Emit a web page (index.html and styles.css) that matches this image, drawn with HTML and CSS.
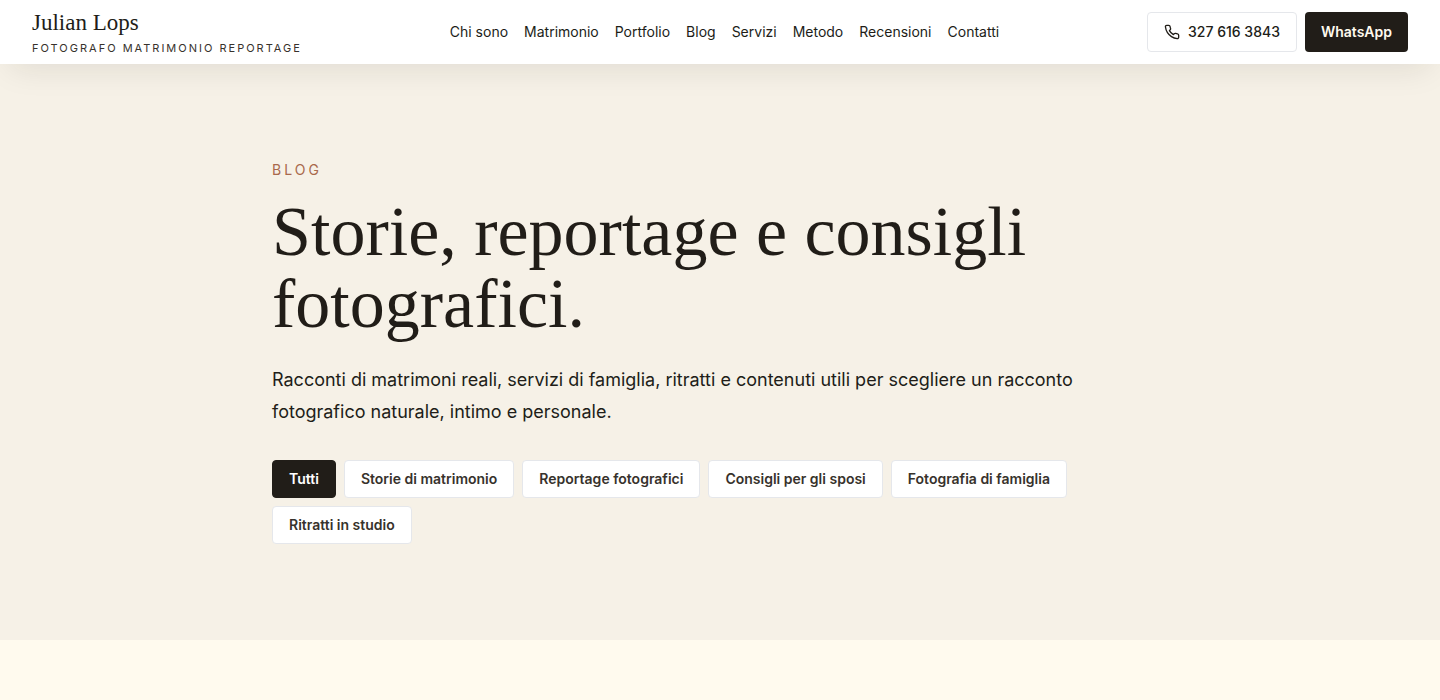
FILE: index.html
```html
<!DOCTYPE html>
<html lang="it">
<head>
    <meta charset="UTF-8">
    <meta name="viewport" content="width=device-width, initial-scale=1.0">
    <title>Blog | Julian Lops</title>
    <link rel="stylesheet" href="styles.css">
</head>
<body>
    <header class="header">
        <a class="brand" href="#">
            <span class="brand-name">Julian Lops</span>
            <span class="brand-tagline">FOTOGRAFO MATRIMONIO REPORTAGE</span>
        </a>
        <nav class="nav">
            <a href="#">Chi sono</a>
            <a href="#">Matrimonio</a>
            <a href="#">Portfolio</a>
            <a href="#">Blog</a>
            <a href="#">Servizi</a>
            <a href="#">Metodo</a>
            <a href="#">Recensioni</a>
            <a href="#">Contatti</a>
        </nav>
        <div class="actions">
            <a class="btn btn-phone" href="tel:3276163843">
                <svg class="icon" viewBox="0 0 24 24" aria-hidden="true">
                    <path d="M22 16.92v3a2 2 0 0 1-2.18 2 19.79 19.79 0 0 1-8.63-3.07 19.5 19.5 0 0 1-6-6 19.79 19.79 0 0 1-3.07-8.67A2 2 0 0 1 4.11 2h3a2 2 0 0 1 2 1.72 12.84 12.84 0 0 0 .7 2.81 2 2 0 0 1-.45 2.11L8.09 9.91a16 16 0 0 0 6 6l1.27-1.27a2 2 0 0 1 2.11-.45 12.84 12.84 0 0 0 2.81.7A2 2 0 0 1 22 16.92z"/>
                </svg>
                327 616 3843
            </a>
            <a class="btn btn-dark" href="#">WhatsApp</a>
        </div>
    </header>
    <main>
        <section class="hero">
            <div class="hero-content">
                <p class="eyebrow">BLOG</p>
                <h1>Storie, reportage e consigli fotografici.</h1>
                <p class="lead">Racconti di matrimoni reali, servizi di famiglia, ritratti e contenuti utili per scegliere un racconto fotografico naturale, intimo e personale.</p>
                <div class="filters">
                    <button class="filter active" type="button">Tutti</button>
                    <button class="filter" type="button">Storie di matrimonio</button>
                    <button class="filter" type="button">Reportage fotografici</button>
                    <button class="filter" type="button">Consigli per gli sposi</button>
                    <button class="filter" type="button">Fotografia di famiglia</button>
                    <button class="filter" type="button">Ritratti in studio</button>
                </div>
            </div>
        </section>
    </main>
</body>
</html>
```
FILE: styles.css
```css
* {
    box-sizing: border-box;
}

body {
    margin: 0;
    font-family: Inter, "Liberation Sans", sans-serif;
    color: #211d18;
    background-color: #fffaee;
}

a {
    color: inherit;
    text-decoration: none;
}

.header {
    position: sticky;
    top: 0;
    z-index: 10;
    display: flex;
    justify-content: space-between;
    align-items: center;
    height: 64px;
    padding: 0 32px;
    background-color: #fff;
    box-shadow: 0 14px 32px -10px rgba(33, 29, 24, 0.1);
}

.brand {
    display: flex;
    flex-direction: column;
}

.brand-name {
    font-family: "Liberation Serif", serif;
    font-size: 23px;
    line-height: 32px;
}

.brand-tagline {
    font-size: 11px;
    line-height: 18px;
    letter-spacing: 2px;
    color: #37322c;
}

.nav {
    display: flex;
    gap: 16px;
    font-size: 14px;
    line-height: 20px;
}

.actions {
    display: flex;
    gap: 8px;
}

.btn {
    display: flex;
    align-items: center;
    gap: 8px;
    height: 40px;
    padding: 0 16px;
    border-radius: 4px;
    font-size: 14px;
    line-height: 20px;
    font-weight: 500;
}

.btn-phone {
    border: 1px solid #e5e7eb;
}

.btn-dark {
    background-color: #211d18;
    color: #fffaee;
    font-weight: 600;
}

.icon {
    width: 16px;
    height: 16px;
    fill: none;
    stroke: currentColor;
    stroke-width: 2;
    stroke-linecap: round;
    stroke-linejoin: round;
}

.hero {
    padding: 96px 32px;
    background-color: #f6f1e7;
}

.hero-content {
    max-width: 896px;
    margin: 0 auto;
}

.eyebrow {
    margin: 0;
    font-size: 14px;
    line-height: 20px;
    letter-spacing: 3px;
    color: #a9694c;
}

h1 {
    margin: 16px 0 0;
    font-family: "Liberation Serif", serif;
    font-size: 70px;
    font-weight: 400;
    line-height: 72px;
}

.lead {
    max-width: 820px;
    margin: 24px 0 0;
    font-size: 18px;
    line-height: 32px;
}

.filters {
    display: flex;
    flex-wrap: wrap;
    gap: 8px;
    margin-top: 32px;
}

.filter {
    padding: 8px 16px;
    border: 1px solid #e5e7eb;
    border-radius: 4px;
    background-color: #fff;
    color: #37322c;
    font-family: inherit;
    font-size: 14px;
    line-height: 20px;
    font-weight: 600;
    cursor: pointer;
}

.filter.active {
    border-color: #211d18;
    background-color: #211d18;
    color: #fff;
}
```
